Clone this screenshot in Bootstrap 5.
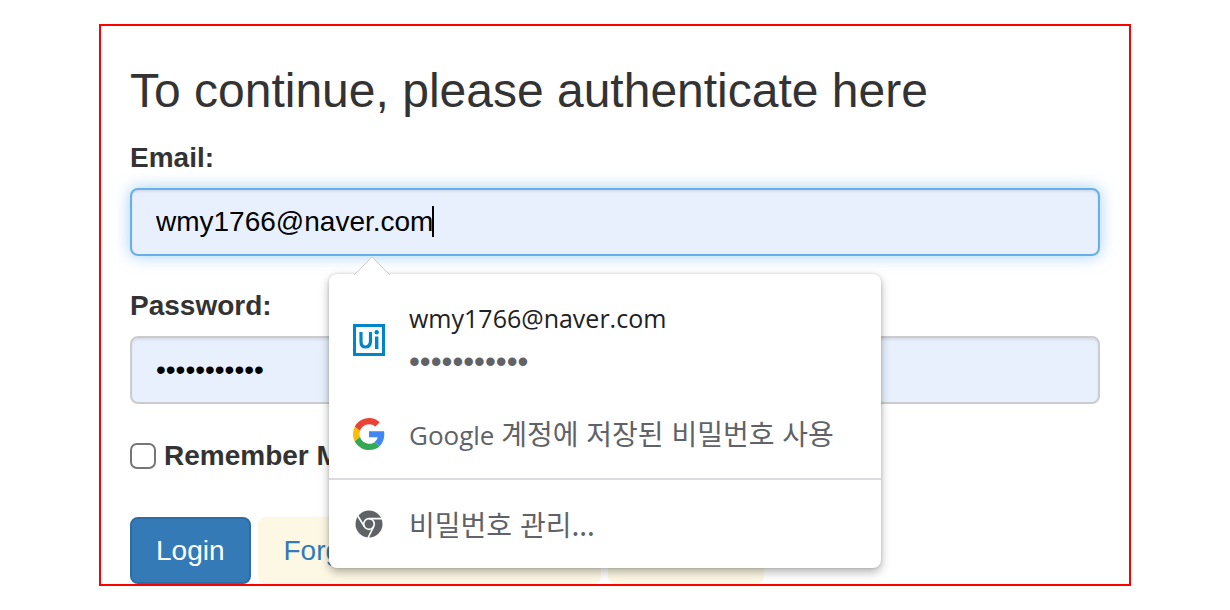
<!DOCTYPE html>
<html lang="en">
<head>
<meta charset="utf-8">
<meta name="viewport" content="width=device-width, initial-scale=1">
<title>Login</title>
<link href="https://cdn.jsdelivr.net/npm/bootstrap@5.3.0/dist/css/bootstrap.min.css" rel="stylesheet">
<style>
  body { font-family: "Liberation Sans", Arial, sans-serif; font-size: 28px; line-height: 40px; color: #333; background: #fff; }
  .auth-frame { max-width: 1032px; border: 2px solid #f00; padding: 38px 29px 0; }
  .auth-title { font-size: 48px; line-height: 54px; margin-bottom: 20px; font-weight: 400; }
  .field-label { font-weight: 700; margin-bottom: 10px; display: block; }
  .field-group { margin-bottom: 30px; }
  .field-input, .field-input:focus { height: 68px; padding: 12px 24px; font-size: 28px; line-height: 40px; color: #000; background: #e8f0fe; border: 2px solid #ccc; border-radius: 8px; box-shadow: inset 0 2px 2px rgba(0,0,0,.075); }
  .field-input.is-active, .field-input.is-active:focus { border-color: #66afe9; box-shadow: inset 0 2px 2px rgba(0,0,0,.075), 0 0 16px rgba(102,175,233,.6); caret-color: transparent; }
  .caret-bar { left: 302px; top: 18px; width: 2px; height: 31px; background: #000; }
  .remember { gap: 8px; margin: 32px 0 41px; font-weight: 700; }
  .remember input { width: 26px; height: 26px; margin: 0; border: 2px solid #767676; border-radius: 4px; }
  .actions { gap: 7px; }
  .action-btn { --bs-btn-font-size: 28px; --bs-btn-line-height: 39px; --bs-btn-padding-x: 24px; --bs-btn-padding-y: 12px; --bs-btn-border-width: 2px; --bs-btn-border-radius: 8px; white-space: nowrap; }
  .action-main { --bs-btn-bg: #337ab7; --bs-btn-border-color: #2e6da4; --bs-btn-color: #fff; }
  .action-soft { --bs-btn-bg: #fcf8e3; --bs-btn-border-color: #fcf8e3; --bs-btn-color: #337ab7; }
  .suggest { left: 199px; top: 86px; width: 552px; padding-top: 16px; background: #fff; border-radius: 8px; box-shadow: 0 4px 10px rgba(0,0,0,.3), 0 0 3px rgba(0,0,0,.15); z-index: 5; font-family: "Open Sans", "Noto Sans CJK KR", sans-serif; font-size: 25px; line-height: 44px; color: #5f6368; }
  .suggest-arrow { left: 24px; top: -18px; }
  .suggest-row { gap: 24px; padding: 0 24px; min-height: 88px; background: none; color: inherit; }
  .suggest-row svg { width: 32px; height: 32px; flex: none; }
  .suggest-account { min-height: 100px; }
  .suggest-name { color: #202124; }
  .suggest-dots { font-family: "Liberation Sans", sans-serif; font-size: 31px; }
  .suggest-manage { border-top: 2px solid #dadce0 !important; min-height: 90px; }
  .suggest-text { font-family: "Noto Sans CJK KR", sans-serif; font-size: 28px; }
  .suggest-brand { font-family: "Open Sans", sans-serif; font-size: 26px; }
</style>
</head>
<body>
<main class="auth-frame mx-auto mt-4">
  <h1 class="auth-title">To continue, please authenticate here</h1>
  <form>
    <div class="field-group">
      <label class="field-label" for="email">Email:</label>
      <div class="position-relative">
        <input class="form-control field-input is-active" id="email" type="text" value="wmy1766@naver.com">
        <span class="caret-bar position-absolute"></span>
        <div class="suggest position-absolute" lang="ko">
          <svg class="suggest-arrow position-absolute" width="40" height="20" viewBox="0 0 40 20" aria-hidden="true"><path d="M1 19 19 1 37 19" fill="#fff" stroke="#ccc" stroke-width="1"/></svg>
          <button type="button" class="suggest-row suggest-account d-flex align-items-center w-100 border-0 text-start">
            <svg viewBox="0 0 32 32" aria-hidden="true"><path d="M1.500 1.500h29v29h-29z" fill="#fff" stroke="#0085ca" stroke-width="3"/><path d="M8 8v9.500Q8 23 12.500 23T17.500 17.500V8" fill="none" stroke="#0085ca" stroke-width="3.200"/><path d="M23.700 12.500V25" stroke="#0085ca" stroke-width="3.400"/><circle cx="23.700" cy="8.300" r="2.200" fill="#0085ca"/></svg>
            <span><span class="suggest-name d-block">wmy1766@naver.com</span><span class="suggest-dots d-block">•••••••••••</span></span>
          </button>
          <button type="button" class="suggest-row d-flex align-items-center w-100 border-0 text-start">
            <svg viewBox="0 0 48 48" aria-hidden="true"><path fill="#ea4335" d="M24 9.500c3.540 0 6.710 1.220 9.210 3.600l6.850-6.850C35.900 2.380 30.470 0 24 0 14.620 0 6.510 5.380 2.560 13.220l7.980 6.190C12.430 13.720 17.740 9.500 24 9.500z"/><path fill="#4285f4" d="M46.980 24.550c0-1.570-.15-3.090-.38-4.550H24v9.020h12.940c-.58 2.960-2.260 5.480-4.780 7.180l7.730 6c4.510-4.180 7.090-10.360 7.090-17.650z"/><path fill="#fbbc05" d="M10.530 28.590A14.500 14.500 0 0 1 9.770 24c0-1.600.27-3.140.76-4.590l-7.980-6.190A24 24 0 0 0 0 24c0 3.880.92 7.540 2.560 10.780z"/><path fill="#34a853" d="M24 48c6.480 0 11.930-2.130 15.890-5.810l-7.730-6c-2.150 1.450-4.920 2.300-8.160 2.300-6.260 0-11.570-4.220-13.470-9.910l-7.980 6.190C6.510 42.620 14.620 48 24 48z"/></svg>
            <span class="suggest-text text-nowrap"><span class="suggest-brand">Google </span>계정에 저장된 비밀번호 사용</span>
          </button>
          <button type="button" class="suggest-row suggest-manage d-flex align-items-center w-100 border-0 text-start">
            <svg viewBox="0 0 32 32" aria-hidden="true"><circle cx="16" cy="16" r="13.500" fill="#5f6368"/><g fill="none" stroke="#fff" stroke-width="1.700"><circle cx="16" cy="16" r="5.300"/><path d="M16 10.700h13M11.400 18.600 4.500 7.500M20.600 18.600 15 30"/></g></svg>
            <span class="suggest-text text-nowrap">비밀번호 관리...</span>
          </button>
        </div>
      </div>
    </div>
    <div class="field-group">
      <label class="field-label" for="password">Password:</label>
      <input class="form-control field-input" id="password" type="password" value="abcdefghijk">
    </div>
    <div class="remember d-flex align-items-center">
      <input class="form-check-input" type="checkbox" id="remember">
      <label for="remember">Remember Me?</label>
    </div>
    <div class="actions d-flex">
      <button type="submit" class="btn action-btn action-main">Login</button>
      <a href="#forgot" class="btn action-btn action-soft">Forgot Your Password?</a>
      <a href="#register" class="btn action-btn action-soft">Register</a>
    </div>
  </form>
</main>
<script src="https://cdn.jsdelivr.net/npm/bootstrap@5.3.0/dist/js/bootstrap.bundle.min.js"></script>
</body>
</html>
